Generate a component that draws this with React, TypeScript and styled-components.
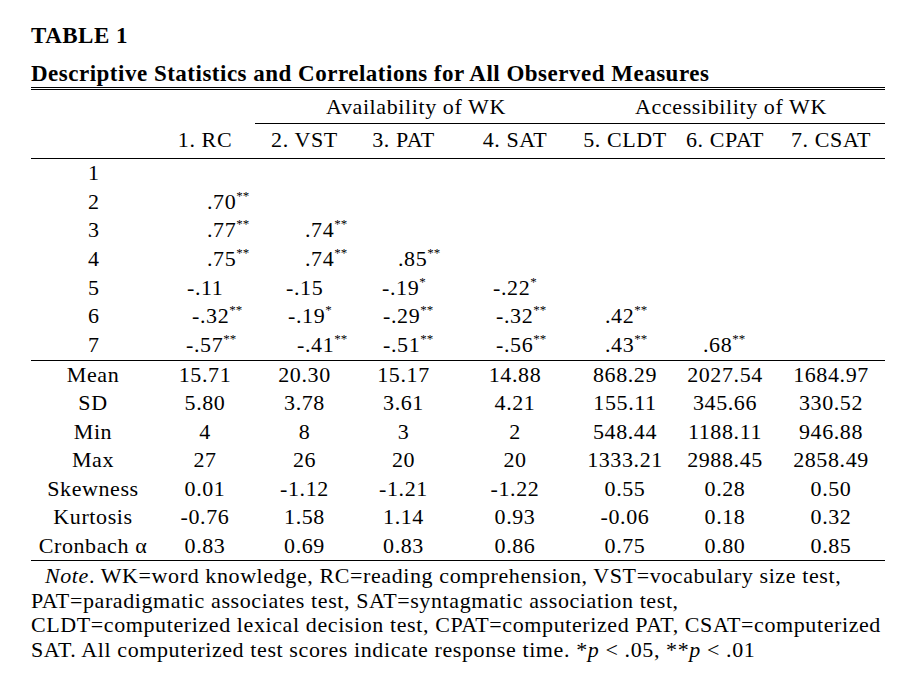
import styled, { createGlobalStyle } from 'styled-components';

const GlobalStyle = createGlobalStyle`
  body {
    margin: 0;
    background: #ffffff;
    color: #000000;
    font-family: "Liberation Serif", "Times New Roman", serif;
  }
`;

const COLUMNS = '124px 100px 99px 99px 124px 96px 104px 108px';

const Page = styled.main`
  width: 854px;
  padding: 22px 0 0 31px;
`;

const Title = styled.h1`
  margin: 0 0 11px;
  font-size: 23px;
  line-height: 28px;
  font-weight: bold;
  letter-spacing: 0.5px;
`;

const Subtitle = styled.h2`
  margin: 0;
  font-size: 23px;
  line-height: 26px;
  font-weight: bold;
  letter-spacing: 0.5px;
`;

const Table = styled.div`
  border-top: 3px double #000;
  font-size: 22px;
  letter-spacing: 0.6px;
`;

const Row = styled.div<{ $height?: number }>`
  display: grid;
  grid-template-columns: ${COLUMNS};
  height: ${(p) => p.$height ?? 28.7}px;
  line-height: ${(p) => p.$height ?? 28.7}px;
`;

const SpanCell = styled.div<{ $from: number; $to: number; $rule?: boolean }>`
  grid-column: ${(p) => p.$from} / ${(p) => p.$to};
  text-align: center;
  line-height: 28.7px;
  padding: 3.3px 0 1.3px;
  border-bottom: 1px solid ${(p) => (p.$rule ? '#000' : 'transparent')};
`;

const HeadRow = styled.div`
  display: grid;
  grid-template-columns: ${COLUMNS};
  line-height: 28.7px;
  padding: 3px 0 3.3px;
  border-bottom: 1px solid #000;
`;

const Body = styled.div`
  border-bottom: 1px solid #000;
`;

const Cell = styled.div<{ $indent?: number }>`
  white-space: nowrap;
  text-align: ${(p) => (p.$indent === undefined ? 'center' : 'left')};
  padding-left: ${(p) => p.$indent ?? 0}px;
`;

const Stars = styled.span`
  font-size: 13px;
  line-height: 0;
  letter-spacing: 0;
  vertical-align: 9px;
`;

const Note = styled.p`
  margin: 3px 0 0;
  font-size: 22px;
  line-height: 24.5px;
  letter-spacing: 0.6px;
  white-space: nowrap;
`;

const NoteLine = styled.span<{ $indent?: number }>`
  display: block;
  padding-left: ${(p) => p.$indent ?? 0}px;
`;

const headers = ['1. RC', '2. VST', '3. PAT', '4. SAT', '5. CLDT', '6. CPAT', '7. CSAT'];

// value, stars, left offset inside the column (matches the tab stops of the original)
type Corr = [string, string, number];

const correlations: Corr[][] = [
  [],
  [['.70', '**', 52]],
  [['.77', '**', 52], ['.74', '**', 50]],
  [['.75', '**', 52], ['.74', '**', 50], ['.85', '**', 44]],
  [['-.11', '', 32], ['-.15', '', 31], ['-.19', '*', 28], ['-.22', '*', 40]],
  [['-.32', '**', 37], ['-.19', '*', 33], ['-.29', '**', 29], ['-.32', '**', 43], ['.42', '**', 28]],
  [['-.57', '**', 31], ['-.41', '**', 42], ['-.51', '**', 29], ['-.56', '**', 43], ['.43', '**', 28], ['.68', '**', 30]],
];

const stats: [string, string[]][] = [
  ['Mean', ['15.71', '20.30', '15.17', '14.88', '868.29', '2027.54', '1684.97']],
  ['SD', ['5.80', '3.78', '3.61', '4.21', '155.11', '345.66', '330.52']],
  ['Min', ['4', '8', '3', '2', '548.44', '1188.11', '946.88']],
  ['Max', ['27', '26', '20', '20', '1333.21', '2988.45', '2858.49']],
  ['Skewness', ['0.01', '-1.12', '-1.21', '-1.22', '0.55', '0.28', '0.50']],
  ['Kurtosis', ['-0.76', '1.58', '1.14', '0.93', '-0.06', '0.18', '0.32']],
  ['Cronbach α', ['0.83', '0.69', '0.83', '0.86', '0.75', '0.80', '0.85']],
];

export default function App() {
  return (
    <>
      <GlobalStyle />
      <Page>
        <Title>TABLE 1</Title>
        <Subtitle>Descriptive Statistics and Correlations for All Observed Measures</Subtitle>
        <Table>
          <Row $height={33}>
            <SpanCell $from={1} $to={3} />
            <SpanCell $from={3} $to={6} $rule>Availability of WK</SpanCell>
            <SpanCell $from={6} $to={9} $rule>Accessibility of WK</SpanCell>
          </Row>
          <HeadRow>
            <Cell />
            {headers.map((h) => (
              <Cell key={h}>{h}</Cell>
            ))}
          </HeadRow>
          <Body>
            {correlations.map((row, i) => (
              <Row key={i}>
                <Cell $indent={57}>{i + 1}</Cell>
                {row.map(([value, stars, indent], j) => (
                  <Cell key={j} $indent={indent}>
                    {value}
                    {stars && <Stars>{stars}</Stars>}
                  </Cell>
                ))}
              </Row>
            ))}
          </Body>
          <Body>
            {stats.map(([label, values]) => (
              <Row key={label} $height={28.5}>
                <Cell>{label}</Cell>
                {values.map((v, j) => (
                  <Cell key={j}>{v}</Cell>
                ))}
              </Row>
            ))}
          </Body>
        </Table>
        <Note>
          <NoteLine $indent={14}>
            <i>Note</i>. WK=word knowledge, RC=reading comprehension, VST=vocabulary size test,
          </NoteLine>
          <NoteLine>PAT=paradigmatic associates test, SAT=syntagmatic association test,</NoteLine>
          <NoteLine>CLDT=computerized lexical decision test, CPAT=computerized PAT, CSAT=computerized</NoteLine>
          <NoteLine>
            SAT. All computerized test scores indicate response time. *<i>p</i> &lt; .05, **<i>p</i> &lt; .01
          </NoteLine>
        </Note>
      </Page>
    </>
  );
}
